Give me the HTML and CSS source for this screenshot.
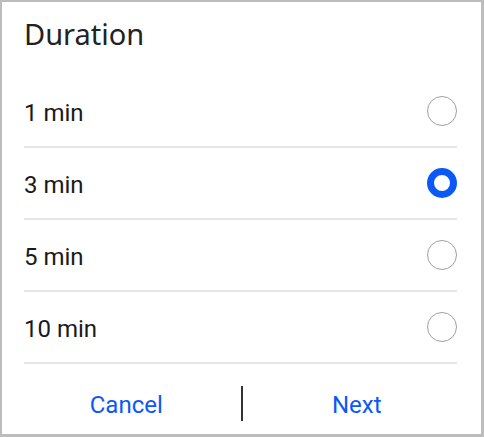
FILE: index.html
```html
<!DOCTYPE html>
<html>
<head>
<meta charset="utf-8">
<link rel="stylesheet" href="styles.css">
</head>
<body>
<div class="dialog">
  <div class="title">Duration</div>
  <ul class="options">
    <li class="option"><span class="label">1 min</span><span class="radio"></span></li>
    <li class="option"><span class="label">3 min</span><span class="radio checked"></span></li>
    <li class="option"><span class="label">5 min</span><span class="radio"></span></li>
    <li class="option"><span class="label">10 min</span><span class="radio"></span></li>
  </ul>
  <div class="footer">
    <button class="btn">Cancel</button>
    <span class="divider"></span>
    <button class="btn">Next</button>
  </div>
</div>
</body>
</html>
```
FILE: styles.css
```css
html, body {
  margin: 0;
  padding: 0;
  background: #ffffff;
}
body {
  font-family: Roboto, "Noto Sans", sans-serif;
  color: #1f1f1f;
}
.dialog {
  box-sizing: border-box;
  width: 484px;
  height: 437px;
  border-style: solid;
  border-color: #bdbdbd;
  border-width: 2px 3px 3px 2px;
  background: #fff;
  display: flex;
  flex-direction: column;
}
.title {
  height: 74px;
  box-sizing: border-box;
  padding: 12px 0 0 22px;
  font-family: "Noto Sans", sans-serif;
  font-size: 29px;
  line-height: 40px;
  color: #222;
}
.options {
  list-style: none;
  margin: 0;
  padding: 0 24px 0 22px;
}
.option {
  height: 70px;
  border-bottom: 2px solid #e6e6e6;
  display: flex;
  align-items: center;
  justify-content: space-between;
}
.label {
  font-size: 24px;
  color: #1a1a1a;
  padding-top: 3px;
}
.radio {
  box-sizing: border-box;
  width: 30px;
  height: 30px;
  border-radius: 50%;
  border: 1.5px solid #a0a0a0;
}
.radio.checked {
  border: 7.5px solid #0a59f7;
}
.footer {
  flex: 1;
  display: flex;
  align-items: center;
  padding: 0 10px 6px 10px;
}
.btn {
  flex: 1;
  background: none;
  border: none;
  font-family: Roboto, "Noto Sans", sans-serif;
  font-size: 24px;
  color: #0a59f7;
  padding: 0;
  margin-top: 17px;
}
.divider {
  width: 2px;
  height: 35px;
  background: #333;
  margin-top: 14px;
}
```
